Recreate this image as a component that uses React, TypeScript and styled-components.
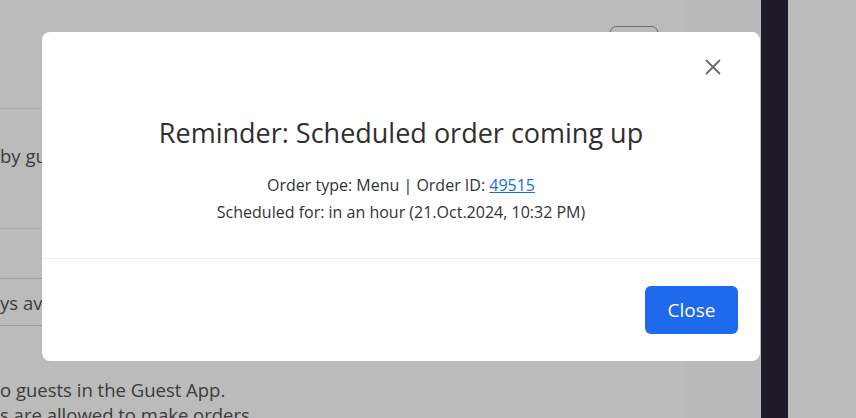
import React from 'react';
import styled, { createGlobalStyle } from 'styled-components';

const GlobalStyle = createGlobalStyle`
  html, body {
    margin: 0;
    padding: 0;
    width: 856px;
    height: 418px;
    overflow: hidden;
    font-family: 'Open Sans', 'Noto Sans', sans-serif;
    background: #ffffff;
  }
`;

const Shell = styled.div`
  display: flex;
  width: 856px;
  height: 418px;
  overflow: hidden;
`;

const Main = styled.div`
  width: 686px;
  display: flex;
  flex-direction: column;
  color: #535353;
  font-size: 18.5px;
  & > * {
    flex-shrink: 0;
  }
`;

const TopBar = styled.div`
  height: 109px;
  border-bottom: 1px solid #eaeef2;
  display: flex;
  justify-content: flex-end;
  align-items: flex-start;
  padding: 26px 28px 0 0;
  box-sizing: border-box;
`;

const GhostButton = styled.div`
  width: 48px;
  height: 36px;
  border: 1px solid #8f9aa8;
  border-radius: 6px;
  box-sizing: border-box;
`;

const SettingRow = styled.div`
  height: 120px;
  border-bottom: 1px solid #eaeef2;
  padding-top: 34px;
  line-height: 25px;
  white-space: nowrap;
  box-sizing: border-box;
`;

const FieldArea = styled.div`
  padding-top: 49px;
  height: 148px;
  box-sizing: border-box;
`;

const Field = styled.div`
  height: 48px;
  border-top: 1px solid #d3d6d9;
  border-bottom: 1px solid #d3d6d9;
  display: flex;
  align-items: center;
  box-sizing: border-box;
  white-space: nowrap;
`;

const Note = styled.p`
  margin: 0;
  line-height: 25px;
  white-space: nowrap;
`;

const SidePanel = styled.div`
  width: 75px;
  background: #fbfcfb;
`;

const Rail = styled.div`
  width: 27px;
  background: #29243a;
`;

const Aside = styled.div`
  flex: 1;
  background: #ffffff;
`;

const Overlay = styled.div`
  position: fixed;
  inset: 0;
  background: rgba(0, 0, 0, 0.267);
  padding: 32px 0 0 42px;
  box-sizing: border-box;
`;

const Dialog = styled.div`
  position: relative;
  width: 718px;
  background: #ffffff;
  border-radius: 8px;
  color: #313131;
`;

const CloseIcon = styled.button`
  position: absolute;
  top: 26px;
  right: 38px;
  width: 18px;
  height: 18px;
  padding: 0;
  border: none;
  background: none;
  display: flex;
  align-items: center;
  justify-content: center;
  cursor: pointer;
`;

const Body = styled.div`
  padding: 85px 24px 32px;
  text-align: center;
  border-bottom: 1px solid #eef0f5;
`;

const Title = styled.h2`
  margin: 0 0 23px;
  font-size: 27px;
  font-weight: 400;
  line-height: 32px;
  color: #2f2f2f;
`;

const Line = styled.p`
  margin: 0;
  font-size: 16px;
  line-height: 27px;
  color: #333333;
`;

const OrderLink = styled.a`
  color: #1a6be6;
  text-decoration: underline;
`;

const Footer = styled.div`
  display: flex;
  justify-content: flex-end;
  padding: 27px 22px 27px;
`;

const PrimaryButton = styled.button`
  width: 93px;
  height: 48px;
  border: none;
  border-radius: 6px;
  background: #1e69ec;
  color: #ffffff;
  font-family: 'Open Sans', 'Noto Sans', sans-serif;
  font-size: 19px;
  cursor: pointer;
`;

const App = () => {
  return (
    <>
      <GlobalStyle />
      <Shell>
        <Main>
          <TopBar>
            <GhostButton />
          </TopBar>
          <SettingRow>by guests</SettingRow>
          <FieldArea>
            <Field>ys available</Field>
          </FieldArea>
          <Note>o guests in the Guest App.</Note>
          <Note>s are allowed to make orders.</Note>
        </Main>
        <SidePanel />
        <Rail />
        <Aside />
      </Shell>

      <Overlay>
        <Dialog>
          <CloseIcon aria-label="Close">
            <svg width="16" height="16" viewBox="0 0 16 16">
              <path
                d="M1.5 1.5 L14.5 14.5 M14.5 1.5 L1.5 14.5"
                stroke="#6b6b6b"
                strokeWidth="1.8"
                strokeLinecap="round"
              />
            </svg>
          </CloseIcon>
          <Body>
            <Title>Reminder: Scheduled order coming up</Title>
            <Line>
              Order type: Menu | Order ID: <OrderLink href="#">49515</OrderLink>
            </Line>
            <Line>Scheduled for: in an hour (21.Oct.2024, 10:32 PM)</Line>
          </Body>
          <Footer>
            <PrimaryButton>Close</PrimaryButton>
          </Footer>
        </Dialog>
      </Overlay>
    </>
  );
};

export default App;
